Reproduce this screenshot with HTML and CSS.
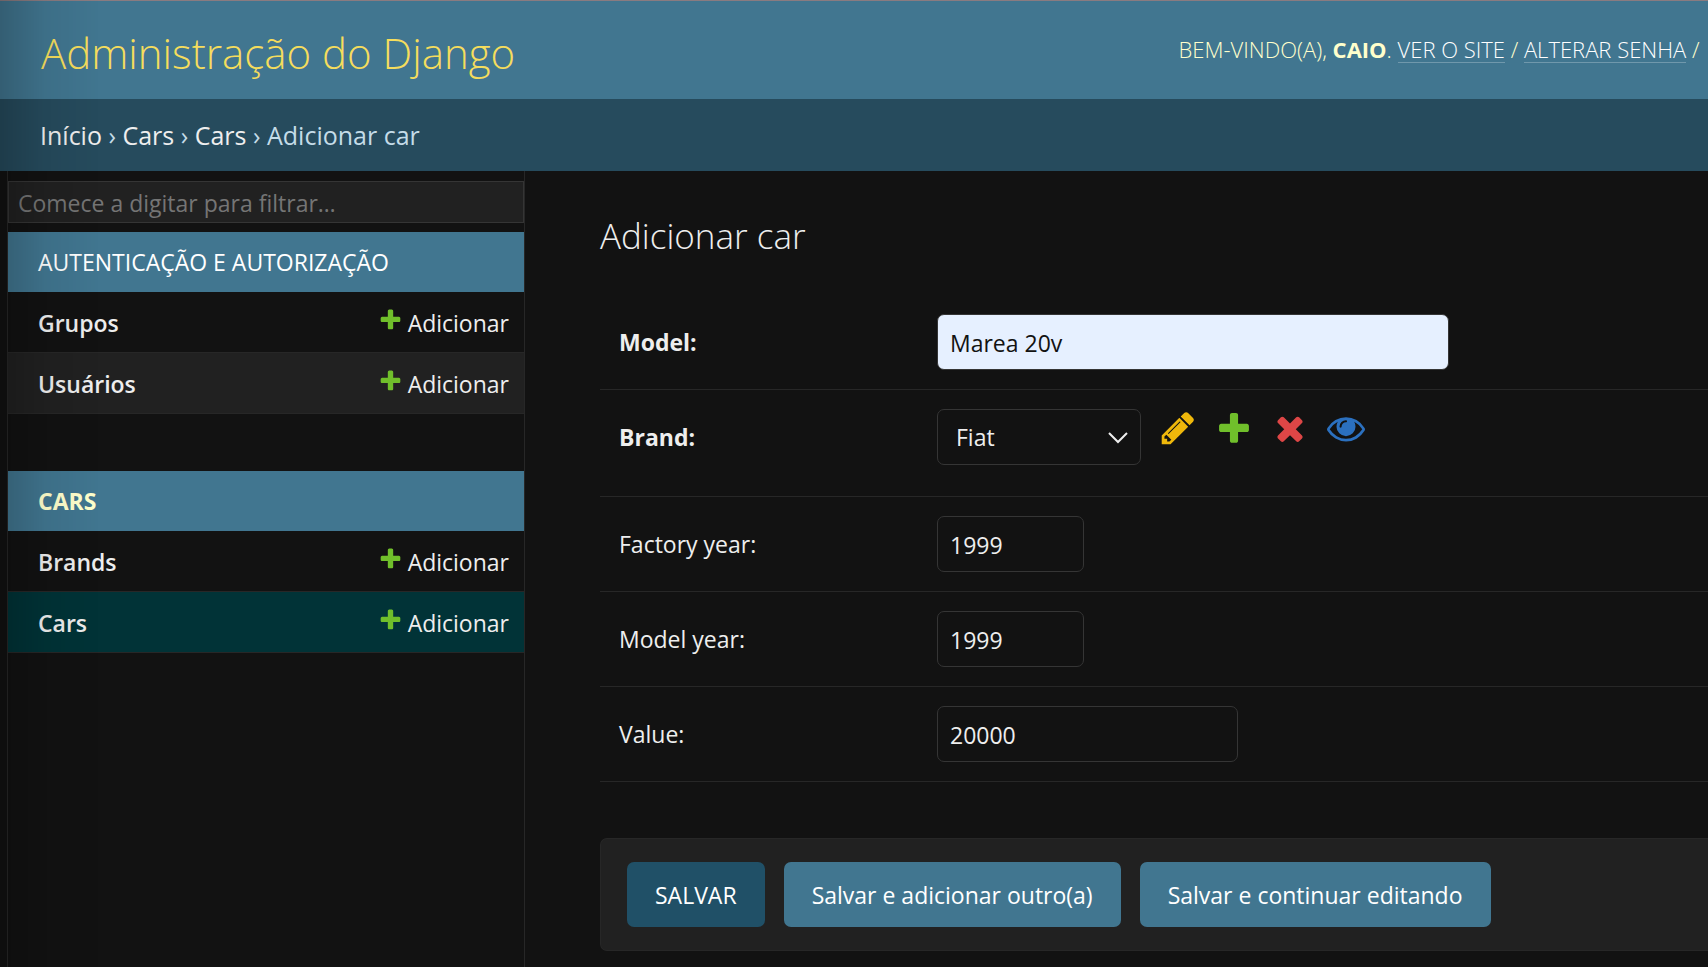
FILE: index.html
```html
<!DOCTYPE html>
<html lang="pt-br">
<head>
<meta charset="utf-8">
<title>Adicionar car | Administração do Django</title>
<link rel="stylesheet" href="styles.css">
</head>
<body>
<svg class="sprite" aria-hidden="true">
  <symbol id="icon-change" viewBox="0 0 1792 1792"><path d="M491 1536l91-91-235-235-91 91v107h128v128h107zm523-928q0-22-22-22-10 0-17 7l-542 542q-7 7-7 17 0 22 22 22 10 0 17-7l542-542q7-7 7-17zm-54-192l416 416-832 832h-416v-416zm683 96q0 53-37 90l-166 166-416-416 166-165q36-38 90-38 53 0 91 38l235 234q37 39 37 91z"/></symbol>
  <symbol id="icon-add" viewBox="0 0 1792 1792"><path d="M1600 796v192q0 40-28 68t-68 28h-416v416q0 40-28 68t-68 28h-192q-40 0-68-28t-28-68v-416h-416q-40 0-68-28t-28-68v-192q0-40 28-68t68-28h416v-416q0-40 28-68t68-28h192q40 0 68 28t28 68v416h416q40 0 68 28t28 68z"/></symbol>
  <symbol id="icon-delete" viewBox="0 0 1792 1792"><path d="M1490 1322q0 40-28 68l-136 136q-28 28-68 28t-68-28l-294-294-294 294q-28 28-68 28t-68-28l-136-136q-28-28-28-68t28-68l294-294-294-294q-28-28-28-68t28-68l136-136q28-28 68-28t68 28l294 294 294-294q28-28 68-28t68 28l136 136q28 28 28 68t-28 68l-294 294 294 294q28 28 28 68z"/></symbol>
  <symbol id="icon-view" viewBox="0 0 1792 1792"><path d="M1664 960q-152-236-381-353 61 104 61 225 0 185-131.5 316.5t-316.5 131.5-316.5-131.5-131.5-316.5q0-121 61-225-229 117-381 353 133 205 333.5 326.5t434.5 121.5 434.5-121.5 333.5-326.5zm-720-384q0-20-14-34t-34-14q-125 0-214.5 89.5t-89.5 214.5q0 20 14 34t34 14 34-14 14-34q0-86 61-147t147-61q20 0 34-14t14-34zm848 384q0 34-20 69-140 230-376.5 368.5t-499.5 138.5-499.5-139-376.5-368q-20-35-20-69t20-69q140-229 376.5-368t499.5-139 499.5 139 376.5 368q20 35 20 69z"/></symbol>
</svg>

<header class="header">
  <h1 class="site-name"><a href="#">Administração do Django</a></h1>
  <div class="user-tools">Bem-vindo(a), <strong>Caio</strong>. <a href="#">Ver o site</a> / <a href="#">Alterar senha</a> /</div>
</header>

<nav class="breadcrumbs" aria-label="Breadcrumbs">
  <a href="#">Início</a> › <a href="#">Cars</a> › <a href="#">Cars</a> › Adicionar car
</nav>

<div class="layout">
  <nav class="sidebar" aria-label="Barra lateral">
    <input class="filter" type="search" placeholder="Comece a digitar para filtrar…" aria-label="Filtrar itens de navegação">

    <table class="module">
      <caption><a href="#">Autenticação e Autorização</a></caption>
      <tbody>
        <tr><th scope="row"><a href="#">Grupos</a></th><td><a class="add" href="#"><svg class="add-icon"><use href="#icon-add"/></svg>Adicionar</a></td></tr>
        <tr class="alt"><th scope="row"><a href="#">Usuários</a></th><td><a class="add" href="#"><svg class="add-icon"><use href="#icon-add"/></svg>Adicionar</a></td></tr>
      </tbody>
    </table>

    <table class="module">
      <caption class="current-app"><a href="#">Cars</a></caption>
      <tbody>
        <tr><th scope="row"><a href="#">Brands</a></th><td><a class="add" href="#"><svg class="add-icon"><use href="#icon-add"/></svg>Adicionar</a></td></tr>
        <tr class="current"><th scope="row"><a href="#">Cars</a></th><td><a class="add" href="#"><svg class="add-icon"><use href="#icon-add"/></svg>Adicionar</a></td></tr>
      </tbody>
    </table>
  </nav>

  <main class="content">
    <h2 class="page-title">Adicionar car</h2>
    <form>
      <div class="form-row">
        <label class="required" for="model">Model:</label>
        <input class="field field-wide field-filled" id="model" type="text" value="Marea 20v">
      </div>
      <div class="form-row form-row-related">
        <label class="required" for="brand">Brand:</label>
        <div class="related">
          <div class="select-wrap">
            <select class="field select" id="brand"><option>Fiat</option></select>
            <svg class="chevron" viewBox="0 0 20 12" aria-hidden="true"><path d="M1 1l9 9 9-9"/></svg>
          </div>
          <a href="#" aria-label="Modificar brand"><svg class="icon icon-change"><use href="#icon-change"/></svg></a>
          <a href="#" aria-label="Adicionar brand"><svg class="icon icon-add"><use href="#icon-add"/></svg></a>
          <a href="#" aria-label="Remover brand"><svg class="icon icon-delete"><use href="#icon-delete"/></svg></a>
          <a href="#" aria-label="Visualizar brand"><svg class="icon icon-view"><use href="#icon-view"/></svg></a>
        </div>
      </div>
      <div class="form-row">
        <label for="factory-year">Factory year:</label>
        <input class="field field-year" id="factory-year" type="text" value="1999">
      </div>
      <div class="form-row">
        <label for="model-year">Model year:</label>
        <input class="field field-year" id="model-year" type="text" value="1999">
      </div>
      <div class="form-row">
        <label for="value">Value:</label>
        <input class="field field-number" id="value" type="text" value="20000">
      </div>
      <div class="submit-row">
        <button class="button button-default" type="submit">SALVAR</button>
        <button class="button" type="submit">Salvar e adicionar outro(a)</button>
        <button class="button" type="submit">Salvar e continuar editando</button>
      </div>
    </form>
  </main>
</div>
</body>
</html>
```

FILE: styles.css
```css
* {
  box-sizing: border-box;
}

body {
  margin: 0;
  min-height: 100vh;
  display: flex;
  flex-direction: column;
  overflow-x: hidden;
  background: #121212;
  color: #eeeeee;
  font-family: "Open Sans", "Noto Sans", sans-serif;
  font-size: 23px;
  line-height: 32px;
}

/* soft shade along the left edge of the window */
body::before {
  content: "";
  position: fixed;
  inset: 0 auto 0 0;
  width: 100px;
  z-index: 1;
  background: linear-gradient(to right, rgba(0, 0, 0, 0.2), rgba(0, 0, 0, 0.06) 45%, rgba(0, 0, 0, 0));
  pointer-events: none;
}

a {
  color: inherit;
  text-decoration: none;
}

.sprite {
  position: absolute;
  width: 0;
  height: 0;
}

.header {
  display: grid;
  grid-template-columns: 69fr 31fr;
  height: 99px;
  border-top: 1px solid #8a7b80;
  background: #417690;
  color: #ffffcc;
  white-space: nowrap;
}

.site-name {
  margin: 0;
  padding: 25px 0 0 41px;
  color: #f5dd5d;
  font-size: 42px;
  font-weight: 300;
  line-height: 54px;
}

.user-tools {
  min-width: 0;
  padding-top: 32px;
  font-size: 22px;
  font-weight: 300;
  text-transform: uppercase;
}

.user-tools strong {
  font-weight: 700;
}

.user-tools a {
  display: inline-block;
  border-bottom: 1px solid rgba(255, 255, 255, 0.25);
  color: #ffffff;
  line-height: 26px;
}

.breadcrumbs {
  height: 72px;
  padding: 20px 40px;
  background: #264b5d;
  color: #c4dce8;
  font-size: 25px;
}

.breadcrumbs a {
  color: #eeeeee;
}

.layout {
  display: flex;
  flex: 1;
}

.sidebar {
  flex: 0 0 518px;
  margin-left: 7px;
  padding-top: 10px;
  border: solid #272727;
  border-width: 0 1px;
}

.filter {
  display: block;
  width: 100%;
  height: 42px;
  margin: 0 0 9px;
  padding: 2px 9px 0;
  border: 1px solid #353535;
  border-radius: 0;
  background: #212121;
  color: #eeeeee;
  font: inherit;
  appearance: none;
}

.filter::placeholder {
  color: #757575;
}

.module {
  width: 100%;
  margin-bottom: 57px;
  border-collapse: separate;
  border-spacing: 0;
}

.module caption {
  height: 60px;
  padding: 14px 30px;
  background: #417690;
  color: #ffffff;
  text-align: left;
  text-transform: uppercase;
}

.module .current-app {
  color: #ffffcc;
  font-weight: 700;
}

.module th,
.module td {
  height: 61px;
  padding: 1px 15px 0 30px;
  border-bottom: 1px solid #272727;
  text-align: left;
}

.module th {
  font-weight: 600;
}

.module td {
  text-align: right;
}

.alt {
  background: #212121;
}

.current {
  background: #013337;
}

.add {
  display: inline-flex;
  gap: 5px;
}

.add-icon {
  width: 25px;
  height: 25px;
  fill: #70bf2b;
}

.content {
  flex: 1;
  min-width: 0;
  padding: 41px 0 16px 75px;
}

.page-title {
  margin: 0 0 35px;
  font-size: 35px;
  font-weight: 300;
  line-height: 48px;
}

.form-row {
  display: flex;
  align-items: center;
  padding: 19px 0;
  border-bottom: 1px solid #272727;
}

.form-row-related {
  padding-bottom: 31px;
}

.form-row label {
  flex: 0 0 337px;
  padding-left: 19px;
}

.form-row .required {
  font-weight: 700;
}

.field {
  height: 56px;
  padding: 2px 12px 0;
  border: 1px solid #353535;
  border-radius: 7px;
  background: #121212;
  color: #eeeeee;
  font: inherit;
}

.field-wide {
  width: 512px;
}

.field-filled {
  background: #e6f0ff;
  color: #121212;
}

.field-year {
  width: 147px;
}

.field-number {
  width: 301px;
}

.related {
  display: flex;
  gap: 18px;
}

.select-wrap {
  position: relative;
}

.select {
  display: block;
  width: 204px;
  padding: 0 18px;
  appearance: none;
}

.chevron {
  position: absolute;
  top: 23px;
  right: 13px;
  width: 20px;
  height: 12px;
  fill: none;
  stroke: #eeeeee;
  stroke-width: 2;
  pointer-events: none;
}

.icon {
  display: block;
  width: 38px;
  height: 38px;
}

.icon-change {
  fill: #efb80b;
}

.icon-add {
  fill: #70bf2b;
}

.icon-delete {
  fill: #dd4646;
}

.icon-view {
  fill: #2b70bf;
}

.submit-row {
  display: flex;
  gap: 19px;
  margin-top: 56px;
  padding: 23px 26px;
  border: solid #272727;
  border-width: 1px 0 1px 1px;
  border-radius: 7px 0 0 7px;
  background: #212121;
}

.button {
  height: 65px;
  padding: 0 28px;
  border: 0;
  border-radius: 7px;
  background: #417690;
  color: #ffffff;
  font: inherit;
}

.button-default {
  background: #205067;
}
```
